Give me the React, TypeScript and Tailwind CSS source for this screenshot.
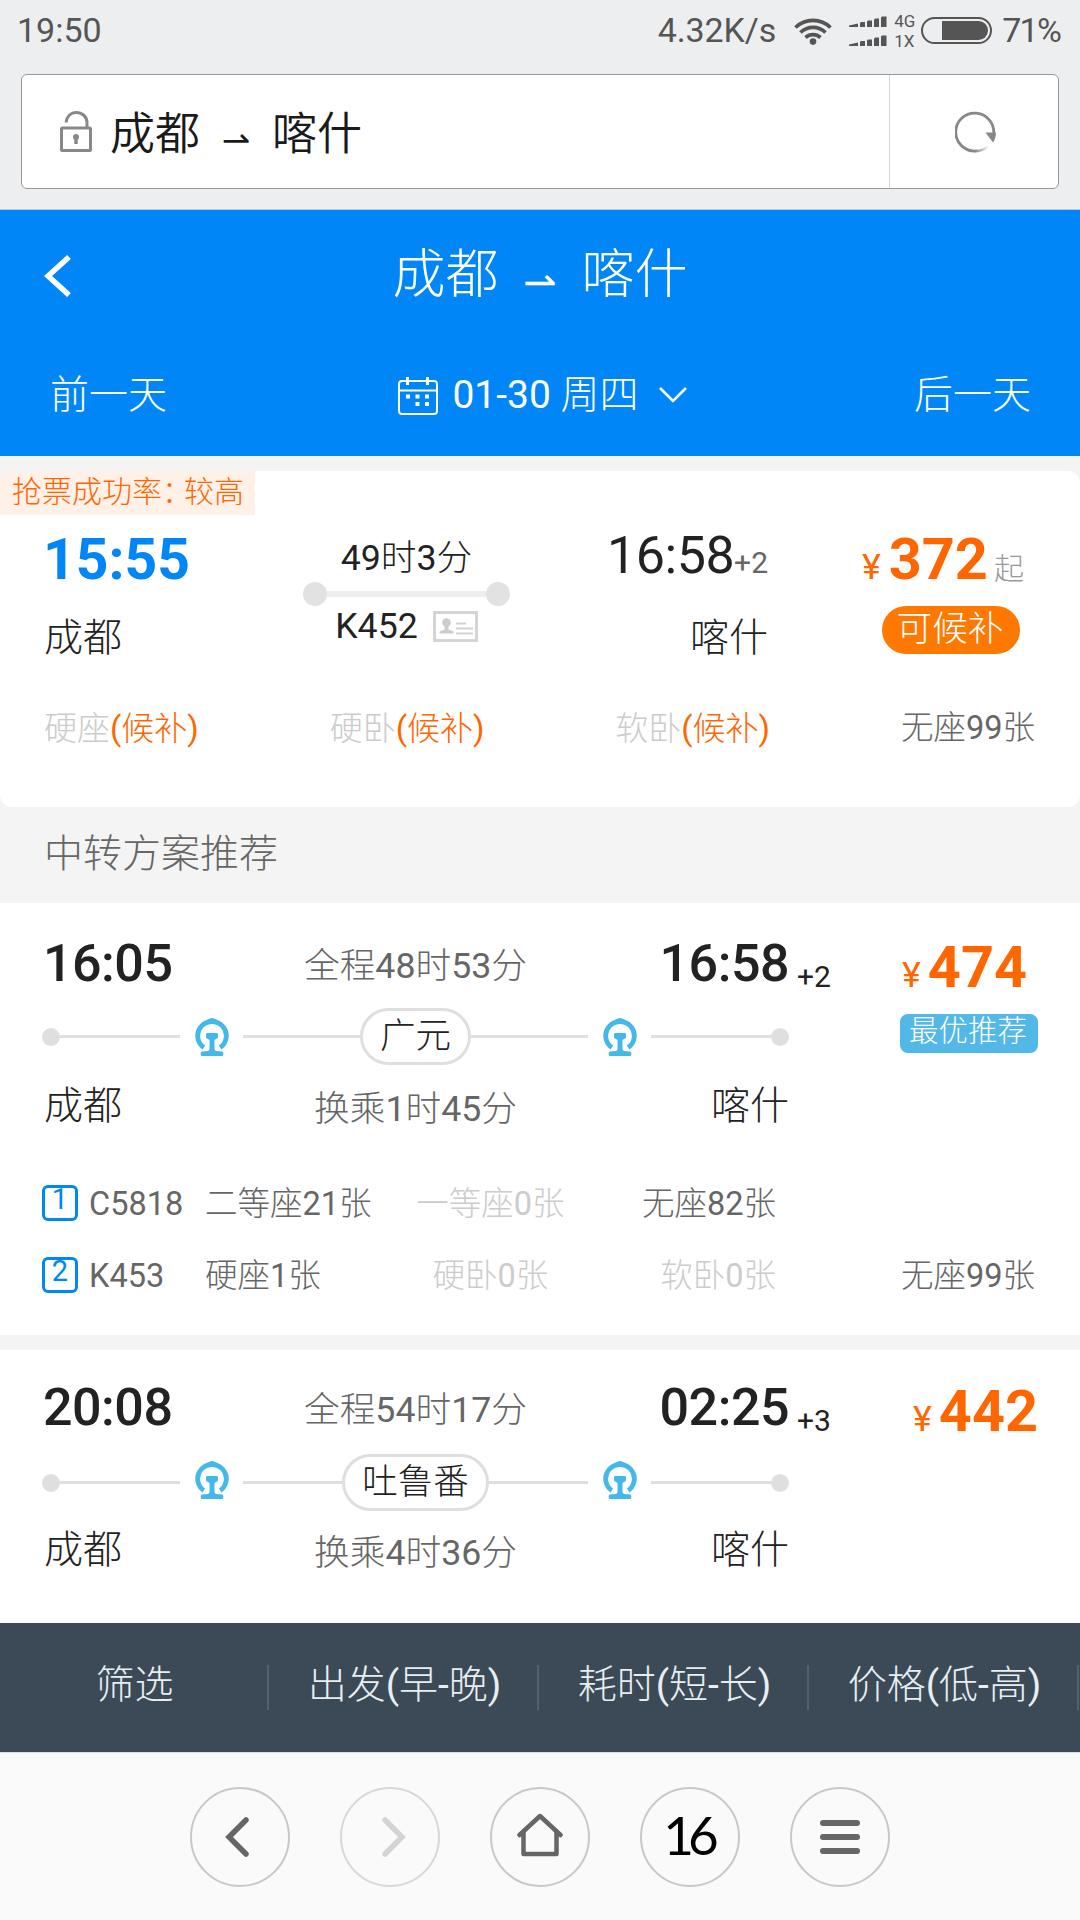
import type { ReactNode } from "react";

type Seat = { name: string; soldOut?: boolean };
type Leg = { no: number; train: string; seats: Seat[] };
type Transfer = {
    depart: string;
    arrive: string;
    dayOffset: string;
    duration: string;
    via: string;
    wait: string;
    price: string;
    best?: boolean;
    legs: Leg[];
};

const transfers: Transfer[] = [
    {
        depart: "16:05",
        arrive: "16:58",
        dayOffset: "+2",
        duration: "全程48时53分",
        via: "广元",
        wait: "换乘1时45分",
        price: "474",
        best: true,
        legs: [
            { no: 1, train: "C5818", seats: [{ name: "二等座21张" }, { name: "一等座0张", soldOut: true }, { name: "无座82张" }] },
            { no: 2, train: "K453", seats: [{ name: "硬座1张" }, { name: "硬卧0张", soldOut: true }, { name: "软卧0张", soldOut: true }, { name: "无座99张" }] },
        ],
    },
    {
        depart: "20:08",
        arrive: "02:25",
        dayOffset: "+3",
        duration: "全程54时17分",
        via: "吐鲁番",
        wait: "换乘4时36分",
        price: "442",
        legs: [],
    },
];

const sorts = ["筛选", "出发(早-晚)", "耗时(短-长)", "价格(低-高)"];

const WifiIcon = () => (
    <svg className="h-[28px] w-[38px]" viewBox="0 0 38 28" fill="none" stroke="#555" strokeWidth="3.8">
        <path d="M1.5 10.5a25 25 0 0 1 35 0" />
        <path d="M6.5 15.5a18 18 0 0 1 25 0" />
        <path d="M11.5 20.5a11 11 0 0 1 15 0" />
        <circle cx="19" cy="24.6" r="3.3" fill="#555" stroke="none" />
    </svg>
);

const SignalIcon = () => (
    <svg className="h-[11px] w-[38px]" viewBox="0 0 38 11" fill="#555">
        <path d="M0 11V9.5L9 7.5V11zM11 11V7l1-1h4v5zM18 11V5.5l1-1h4V11zM25 11V4l1-1.5h4V11zM32 11V1.5l1-1h4.5V11z" />
    </svg>
);

const LockIcon = () => (
    <svg className="h-[41px] w-[32px]" viewBox="0 0 32 41" fill="none" stroke="#888" strokeWidth="3">
        <rect x="1.5" y="17" width="29" height="22.5" rx="1" />
        <path d="M6 11.5C7 5 11 1.5 16 1.5c6 0 11 4 11 10V17" />
        <circle cx="16" cy="26" r="3" fill="#888" stroke="none" />
        <path d="M16 26v7" strokeWidth="3.5" />
    </svg>
);

const ReloadIcon = () => (
    <svg className="ml-[3px] h-[42px] w-[42px]" viewBox="0 0 42 42" fill="none">
        <defs>
            <linearGradient id="fade" gradientUnits="userSpaceOnUse" x1="20" y1="40" x2="34" y2="36">
                <stop offset="0" stopColor="#888" />
                <stop offset="1" stopColor="#888" stopOpacity="0" />
            </linearGradient>
        </defs>
        <path d="M38.5 24A19 19 0 1 0 21 40" stroke="#888" strokeWidth="2.8" />
        <path d="M20.5 40A19 19 0 0 0 33 35.5" stroke="url(#fade)" strokeWidth="2.8" />
        <path d="M30.5 21.5H41c0 4-1 7-3 10z" fill="#888" />
    </svg>
);

const CalendarIcon = () => (
    <svg className="mt-[2px] h-[38px] w-[40px]" viewBox="0 0 40 38" fill="none" stroke="#fff" strokeWidth="2">
        <rect x="1" y="4" width="38" height="33" rx="3" />
        <path d="M1 13.5h38" />
        <path d="M9.5 0v8M29.5 0v8" strokeWidth="3" />
        <path d="M8 19.5h4M17.5 19.5h4M27 19.5h4M17.5 27h4M27 27h4" strokeWidth="4" />
    </svg>
);

const IdCardIcon = () => (
    <svg className="h-[31px] w-[45px]" viewBox="0 0 45 31" fill="none" stroke="#d2d2d2">
        <rect x="1.5" y="1.5" width="42" height="28" strokeWidth="2.8" />
        <circle cx="13.5" cy="11.5" r="4.3" fill="#ccc" stroke="none" />
        <path d="M11.5 14h4v4.5l5 2v2H6.5v-2l5-2z" fill="#ccc" stroke="none" />
        <path d="M23 12.5h10M23 17.5h17M23 22.5h17" strokeWidth="1.8" />
    </svg>
);

const RailIcon = () => (
    <svg className="h-[38px] w-[34px]" viewBox="0 0 34 38" fill="none" stroke="#45b8ea">
        <path d="M8.8 29.5A14.3 14.3 0 1 1 25.2 29.5" strokeWidth="4.8" />
        <path d="M12 3.5c1-2 3-3.5 5-3.5s4 1.5 5 3.5z" fill="#45b8ea" stroke="none" />
        <path
            d="M12.3 15h9.4q1.3 0 1.3 1.5v2.5q0 1.500-1.500 1.800L19.500 22v9q0 1.800 2 2l5.500.5q1.300.2 1.300 1.500V36.500q0 1.500-1.300 1.500H7q-1.300 0-1.300-1.500V35q0-1.300 1.300-1.500l5.500-.5q2-.2 2-2v-9l-2-1.200q-1.500-.3-1.500-1.800v-2.500q0-1.500 1.300-1.500z"
            fill="#45b8ea"
            stroke="none"
        />
    </svg>
);

const StatusBar = () => (
    <div className="flex h-[61px] items-center pl-[17px] pr-[20px] text-[34px] text-[#555]">
        <span>19:50</span>
        <span className="ml-auto tracking-[-0.1px]">4.32K/s</span>
        <span className="ml-[18px]"><WifiIcon /></span>
        <span className="ml-[17px] flex flex-col gap-[8px]">
            <SignalIcon />
            <SignalIcon />
        </span>
        <span className="ml-[7px] flex flex-col text-[17px] leading-[20px]">
            <span>4G</span>
            <span>1X</span>
        </span>
        <span className="ml-[6px] flex h-[27px] w-[71px] justify-end rounded-full border-2 border-[#555] p-[2px]">
            <span className="h-full w-[46px] rounded-r-full bg-[#555]" />
        </span>
        <span className="ml-[10px] tracking-[-1.8px]">71%</span>
    </div>
);

const AddressBar = () => (
    <div className="mx-[21px] mt-[13px] flex h-[115px] rounded-[6px] border border-[#999] bg-white text-[45px] text-[#1a1a1a]">
        <div className="flex flex-1 items-center pl-[38px]">
            <LockIcon />
            <span className="ml-[18px] flex items-center pt-[7px] font-['Roboto','Noto_Sans_CJK_SC_DemiLight','Noto_Sans_CJK_SC',sans-serif]">
                成都
                <span className="w-[72px] pt-[10px] text-center font-['DejaVu_Sans'] text-[34px]">⇀</span>
                喀什
            </span>
        </div>
        <div className="flex w-[169px] items-center justify-center border-l border-[#d4d4d4]">
            <ReloadIcon />
        </div>
    </div>
);

const Header = () => (
    <div className="h-[246px] bg-[#0086f6] text-white">
        <div className="flex h-[126px] items-center">
            <div className="w-[120px] pl-[44px] pt-[5px]">
                <svg className="h-[42px] w-[28px]" viewBox="0 0 28 42" fill="none" stroke="#fff" strokeWidth="5.5">
                    <path d="M25 2L4 21l21 19" />
                </svg>
            </div>
            <h1 className="flex flex-1 items-center justify-center pt-[5px] text-[53px]">
                成都
                <span className="w-[83px] pt-[12px] text-center font-['DejaVu_Sans'] text-[40px]">⇀</span>
                喀什
            </h1>
            <div className="w-[120px]" />
        </div>
        <div className="flex h-[118px] items-center justify-between pl-[50px] pr-[49px] text-[39px]">
            <button>前一天</button>
            <div className="flex items-center pl-[5px]">
                <CalendarIcon />
                <span className="ml-[14px]">01-30 周四</span>
                <svg className="ml-[19px] h-[19px] w-[30px]" viewBox="0 0 30 19" fill="none" stroke="#fff" strokeWidth="2.6">
                    <path d="M2 2l13 13L28 2" />
                </svg>
            </div>
            <button>后一天</button>
        </div>
    </div>
);

const Waitlist = ({ seat }: { seat: string }) => (
    <span className="text-[33px]">
        <span className="text-[#ccc]">{seat}</span>
        <span className="text-[#ff6600]">(候补)</span>
    </span>
);

const DirectCard = () => (
    <div className="mt-[15px] h-[336px] overflow-hidden rounded-[12px] bg-white">
        <div className="flex h-[44px] w-[255px] items-center bg-[#fff0e8] pb-[4px] pl-[12px] text-[30px] text-[#ff6600]">
            抢票成功率<span className="mr-[7px] [font-feature-settings:'halt']">：</span>较高
        </div>
        <div className="flex h-[197px]">
            <div className="w-[258px] pt-[16px]">
                <div className="pl-[43px] text-[57px] font-bold leading-[58px] text-[#0086f6]">15:55</div>
                <div className="mt-[30px] pl-[44px] text-[39px] leading-none">成都</div>
            </div>
            <div className="ml-[45px] flex w-[207px] flex-col items-center pt-[26px] leading-none">
                <div className="text-[35.7px]">49时3分</div>
                <div className="mt-[5px] flex w-full items-center">
                    <span className="h-[24px] w-[24px] rounded-full bg-[#e2e2e2]" />
                    <span className="h-[6px] flex-1 bg-[#eee]" />
                    <span className="h-[24px] w-[24px] rounded-full bg-[#e2e2e2]" />
                </div>
                <div className="mt-[3px] flex items-center gap-[15px] text-[35.7px]">
                    K452
                    <IdCardIcon />
                </div>
            </div>
            <div className="flex w-[258px] flex-col items-end pt-[15px] leading-none">
                <div className="flex items-baseline">
                    <span className="text-[52px] tracking-[-0.5px]">16:58</span>
                    <span className="text-[30px] text-[#666]">+2</span>
                </div>
                <div className="mt-[37px] text-[39px]">喀什</div>
            </div>
            <div className="ml-[94px] pt-[16px]">
                <div className="flex h-[58px] items-baseline leading-[58px] text-[#ff6600]">
                    <span className="text-[35.7px]">¥</span>
                    <span className="ml-[8px] text-[57.6px] font-bold">372</span>
                    <span className="ml-[6px] text-[30px] text-[#999]">起</span>
                </div>
                <div className="ml-[20px] mt-[17px] flex h-[48px] w-[138px] items-center justify-center rounded-full bg-[#ff7800] pr-[2px] text-[35.7px] leading-none text-white">可候补</div>
            </div>
        </div>
        <div className="flex items-center justify-between pl-[44px] pr-[45px] text-[32.5px] leading-none text-[#666]">
            <Waitlist seat="硬座" />
            <Waitlist seat="硬卧" />
            <Waitlist seat="软卧" />
            <span className="whitespace-nowrap">无座99张</span>
        </div>
    </div>
);

const Route = ({ via, raised }: { via: string; raised?: boolean }) => {
    const icon = `flex w-[63px] justify-center ${raised ? "pb-[5px]" : ""}`;
    return (
        <div className="flex h-[57px] items-center">
            <span className="h-[18px] w-[18px] rounded-full bg-[#dfdfdf]" />
            <span className="h-[3px] w-[120px] bg-[#dfdfdf]" />
            <span className={icon}><RailIcon /></span>
            <span className="flex flex-1 items-center">
                <span className="h-[3px] flex-1 bg-[#dfdfdf]" />
                <span className="flex h-[57px] items-center rounded-full border-3 border-[#dfdfdf] px-[17px] text-[35.5px] leading-none">{via}</span>
                <span className="h-[3px] flex-1 bg-[#dfdfdf]" />
            </span>
            <span className={icon}><RailIcon /></span>
            <span className="h-[3px] w-[120px] bg-[#dfdfdf]" />
            <span className="h-[18px] w-[18px] rounded-full bg-[#dfdfdf]" />
        </div>
    );
};

const LegRow = ({ leg }: { leg: Leg }) => (
    <div className="flex h-[36px] items-center text-[32.5px] leading-none text-[#666]">
        <span className="mb-[3px] flex h-[36px] w-[36px] items-center justify-center rounded-[6px] border-3 border-[#0086f6] pb-[7px] text-[29px] text-[#0086f6]">{leg.no}</span>
        <span className="w-[127px] pl-[11px]">{leg.train}</span>
        <span className="grid w-[571px] grid-cols-3 whitespace-nowrap">
            {leg.seats.slice(0, 3).map((seat, idx) => (
                <span key={idx} className={`${["text-left", "text-center", "text-right"][idx]} ${seat.soldOut ? "text-[#ccc]" : ""}`}>{seat.name}</span>
            ))}
        </span>
        {leg.seats[3] && <span className="w-[259px] text-right">{leg.seats[3].name}</span>}
    </div>
);

const TransferCard = ({ item, children }: { item: Transfer; children?: ReactNode }) => (
    <div className="bg-white pl-[42px] pt-[35px]">
        <div className="flex">
            <div className="w-[747px]">
                <div className={`grid grid-cols-3 leading-none ${item.best ? "h-[70px]" : "h-[72px]"}`}>
                    <span className="pl-[1px] text-[52px] font-medium tracking-[-0.5px]">{item.depart}</span>
                    <span className="whitespace-nowrap pt-[11px] text-center text-[35.7px] text-[#666]">{item.duration}</span>
                    <span className="text-right text-[52px] font-medium tracking-[-0.5px]">{item.arrive}</span>
                </div>
                <Route via={item.via} raised={!item.best} />
                <div className={`grid grid-cols-3 leading-none ${item.best ? "mt-[22px]" : "mt-[20px]"}`}>
                    <span className="pl-[2px] text-[39px]">成都</span>
                    <span className="pt-[5px] text-center text-[35.7px] text-[#666]">{item.wait}</span>
                    <span className="text-right text-[39px]">喀什</span>
                </div>
            </div>
            <span className="w-[58px] pl-[8px] pt-[24px] text-[30px] leading-none">{item.dayOffset}</span>
            <div className="w-[191px] pt-[1px] text-right">
                <div className={`flex h-[58px] items-baseline justify-end leading-[58px] text-[#ff6600] ${item.best ? "pr-[11px]" : ""}`}>
                    <span className="text-[35.7px]">¥</span>
                    <span className="ml-[7px] text-[57.6px] font-bold">{item.price}</span>
                </div>
                {item.best && (
                    <div className="ml-[53px] mt-[17px] flex h-[39px] w-[138px] items-center justify-center rounded-[8px] bg-[#52b8e8] pb-[4px] pr-[2px] text-[29.5px] leading-none text-white">最优推荐</div>
                )}
            </div>
        </div>
        {children}
    </div>
);

const SortBar = () => (
    <div className="-ml-[1px] flex h-[129px] w-[1081px] items-center bg-[#3c4a57] text-[39px] text-[#e8eef2]">
        {sorts.map((label) => (
            <button key={label} className="h-[45px] w-[270px] border-r-2 border-[#53616d] pb-[4px] pl-[3px] leading-[41px]">{label}</button>
        ))}
    </div>
);

const NavButton = ({ children, dim }: { children: ReactNode; dim?: boolean }) => (
    <button className={`flex h-[100px] w-[100px] items-center justify-center rounded-full border-2 ${dim ? "border-[#d8d8d8]" : "border-[#c8c8c8]"}`}>{children}</button>
);

const NavBar = () => (
    <div className="flex h-[168px] items-center justify-center gap-[50px] border-t border-[#ddd] bg-[#fafafa]">
        <NavButton>
            <svg className="mr-[6px] h-[40px] w-[24px]" viewBox="0 0 24 40" fill="none" stroke="#666" strokeWidth="5.5" strokeLinecap="round">
                <path d="M21 3L4 20l17 17" />
            </svg>
        </NavButton>
        <NavButton dim>
            <svg className="ml-[8px] h-[40px] w-[24px]" viewBox="0 0 24 40" fill="none" stroke="#d4d4d4" strokeWidth="5.5" strokeLinecap="round">
                <path d="M3 3l17 17L3 37" />
            </svg>
        </NavButton>
        <NavButton>
            <svg className="mb-[4px] h-[44px] w-[46px]" viewBox="0 0 46 44" fill="none" stroke="#666" strokeWidth="4.5" strokeLinejoin="round" strokeLinecap="round">
                <path d="M2.5 22L23 3l20.5 19" />
                <path d="M6.5 19v22h33V19" />
            </svg>
        </NavButton>
        <NavButton>
            <span className="pb-[4px] pr-[4px] font-['Lato'] text-[53px] leading-none tracking-[-6px] text-black">16</span>
        </NavButton>
        <NavButton>
            <span className="flex flex-col gap-2">
                <span className="h-[6px] w-[40px] rounded-full bg-[#666]" />
                <span className="h-[6px] w-[40px] rounded-full bg-[#666]" />
                <span className="h-[6px] w-[40px] rounded-full bg-[#666]" />
            </span>
        </NavButton>
    </div>
);

const App = () => {
    return (
        <div className="flex h-[1920px] w-[1080px] flex-col overflow-hidden bg-[#f4f4f4] font-['Roboto','Noto_Sans_CJK_SC_Light','Noto_Sans_CJK_SC',sans-serif] font-normal text-[#222]">
            <div className="h-[210px] border-b border-[#c4c8cc] bg-[#edeef0]">
                <StatusBar />
                <AddressBar />
            </div>
            <Header />
            <DirectCard />
            <div className="flex h-[96px] items-center pb-[2px] pl-[44px] text-[39px] text-[#666]">中转方案推荐</div>
            <div className="h-[432px] bg-white">
                <TransferCard item={transfers[0]}>
                    <div className="mt-[59px] flex flex-col gap-[36px]">
                        {transfers[0].legs.map((leg) => (
                            <LegRow key={leg.no} leg={leg} />
                        ))}
                    </div>
                </TransferCard>
            </div>
            <div className="mt-[15px] h-[273px] overflow-hidden bg-white">
                <div className="-mt-[3px]">
                    <TransferCard item={transfers[1]} />
                </div>
            </div>
            <SortBar />
            <NavBar />
        </div>
    );
};

export default App;
